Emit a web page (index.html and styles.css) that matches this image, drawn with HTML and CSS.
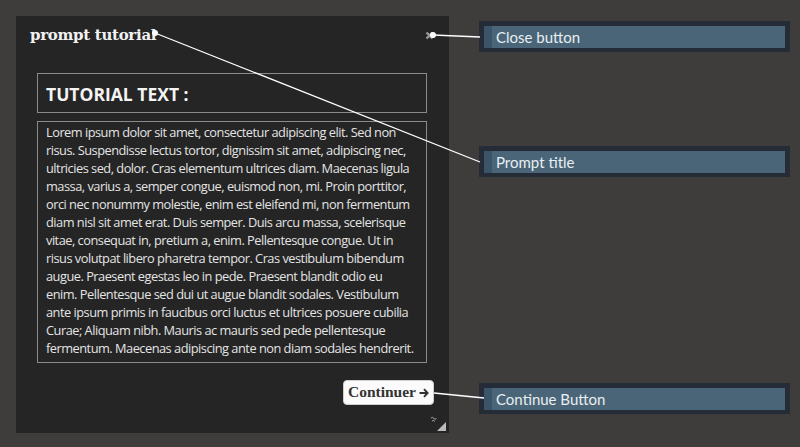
FILE: index.html
```html
<!DOCTYPE html>
<html lang="en">
<head>
    <meta charset="UTF-8">
    <meta name="viewport" content="width=device-width, initial-scale=1.0">
    <link rel="stylesheet" href="styles.css">
</head>
<body>
    <div class="page">
        <!-- Fenêtre du tutoriel -->
        <div class="prompt">
            <div class="prompt-head">
                <span class="prompt-title">prompt tutorial</span>
                <svg class="prompt-close" width="9" height="9" viewBox="0 0 9 9">
                    <path d="M1.5 1.5 L7.5 7.5 M7.5 1.5 L1.5 7.5" stroke="#9a9a9a" stroke-width="2.4"/>
                </svg>
            </div>
            <div class="prompt-body">
                <div class="box box-title">TUTORIAL TEXT :</div>
                <div class="box box-text">Lorem ipsum dolor sit amet, consectetur adipiscing elit. Sed non<br>
risus. Suspendisse lectus tortor, dignissim sit amet, adipiscing nec,<br>
ultricies sed, dolor. Cras elementum ultrices diam. Maecenas ligula<br>
massa, varius a, semper congue, euismod non, mi. Proin porttitor,<br>
orci nec nonummy molestie, enim est eleifend mi, non fermentum<br>
diam nisl sit amet erat. Duis semper. Duis arcu massa, scelerisque<br>
vitae, consequat in, pretium a, enim. Pellentesque congue. Ut in<br>
risus volutpat libero pharetra tempor. Cras vestibulum bibendum<br>
augue. Praesent egestas leo in pede. Praesent blandit odio eu<br>
enim. Pellentesque sed dui ut augue blandit sodales. Vestibulum<br>
ante ipsum primis in faucibus orci luctus et ultrices posuere cubilia<br>
Curae; Aliquam nibh. Mauris ac mauris sed pede pellentesque<br>
fermentum. Maecenas adipiscing ante non diam sodales hendrerit.</div>
            </div>
            <div class="prompt-foot">
                <button class="btn-continue">Continuer<svg class="arrow" width="10" height="10" viewBox="0 0 10 10">
                    <path d="M0.5 5 H8.5 M5 1.2 L8.6 5 L5 8.8" stroke="#333" stroke-width="1.9" fill="none"/>
                </svg></button>
            </div>
            <svg class="grip" width="18" height="16" viewBox="0 0 18 16">
                <path d="M1 2 Q2.5 0.5 4 2.5 Q5 4 6.5 2.5 M2 5 Q3.5 3.5 5 5.5" stroke="#aaa" stroke-width="1" fill="none"/>
                <polygon points="16,6 16,15 7,15" fill="#bbb"/>
            </svg>
        </div>

        <!-- Annotations -->
        <div class="note note-close"><span>Close button</span></div>
        <div class="note note-title"><span>Prompt title</span></div>
        <div class="note note-continue"><span>Continue Button</span></div>

        <svg class="links" width="800" height="447">
            <line x1="433" y1="35" x2="480" y2="37" stroke="#fff" stroke-width="1.3"/>
            <circle cx="433" cy="35" r="3" fill="#fff"/>
            <line x1="155" y1="33" x2="480" y2="162" stroke="#fff" stroke-width="1.3"/>
            <circle cx="155" cy="33" r="3" fill="#fff"/>
            <line x1="434" y1="393" x2="484" y2="398" stroke="#fff" stroke-width="1.3"/>
        </svg>
    </div>
</body>
</html>
```

FILE: styles.css
```css
/* Page */
body {
    margin: 0;
    background: #3f3d3b;
}

.page {
    position: relative;
    width: 800px;
    height: 447px;
    padding: 16px;
    box-sizing: border-box;
}

/* Fenêtre */
.prompt {
    position: relative;
    width: 433px;
    height: 417px;
    background: #252525;
    display: flex;
    flex-direction: column;
}

.prompt-head {
    display: flex;
    justify-content: space-between;
    align-items: center;
    padding: 8px 15px 0 14px;
    height: 22px;
}

.prompt-title {
    font-family: "DejaVu Serif", serif;
    font-weight: bold;
    font-size: 15px;
    color: #f2f2f2;
    letter-spacing: -0.3px;
}

.prompt-close {
    margin-top: 1px;
}

.prompt-body {
    padding: 27px 22px 0 21px;
    display: flex;
    flex-direction: column;
    gap: 8px;
}

.box {
    border: 1px solid #8a8a8a;
    font-family: "Open Sans", sans-serif;
    color: #e4e4e4;
}

.box-title {
    height: 38px;
    line-height: 40px;
    padding: 0 8px;
    font-size: 17.5px;
    font-weight: bold;
    color: #f4f4f4;
}

.box-text {
    height: 239px;
    padding: 1px 0 0 8px;
    font-size: 12.8px;
    line-height: 18px;
    letter-spacing: -0.5px;
    white-space: nowrap;
}

.prompt-foot {
    display: flex;
    justify-content: flex-end;
    padding: 17px 15px 0 0;
}

.btn-continue {
    display: flex;
    align-items: center;
    justify-content: center;
    gap: 3px;
    width: 91px;
    height: 25px;
    border: 1px solid #cfcfcf;
    border-radius: 4px;
    background: #fbfbfb;
    color: #333;
    font-family: "Liberation Serif", serif;
    font-weight: bold;
    font-size: 15.5px;
    padding: 0 0 1px 0;
}

.arrow {
    margin-top: 1px;
}

.grip {
    position: absolute;
    right: 1px;
    bottom: 1px;
}

/* Annotations */
.note {
    position: absolute;
    left: 479px;
    width: 301px;
    height: 22px;
    border: 5px solid #262b38;
    border-bottom-width: 4px;
    background: #4a6577;
    box-shadow: inset 8px 0 0 #3c5467;
    font-family: Lato, sans-serif;
    font-size: 15px;
    color: #e8eef2;
    line-height: 22px;
}

.note span {
    padding-left: 12px;
}

.note-close {
    top: 21px;
}

.note-title {
    top: 146px;
}

.note-continue {
    top: 383px;
}

.links {
    position: absolute;
    left: 0;
    top: 0;
    pointer-events: none;
}
```
